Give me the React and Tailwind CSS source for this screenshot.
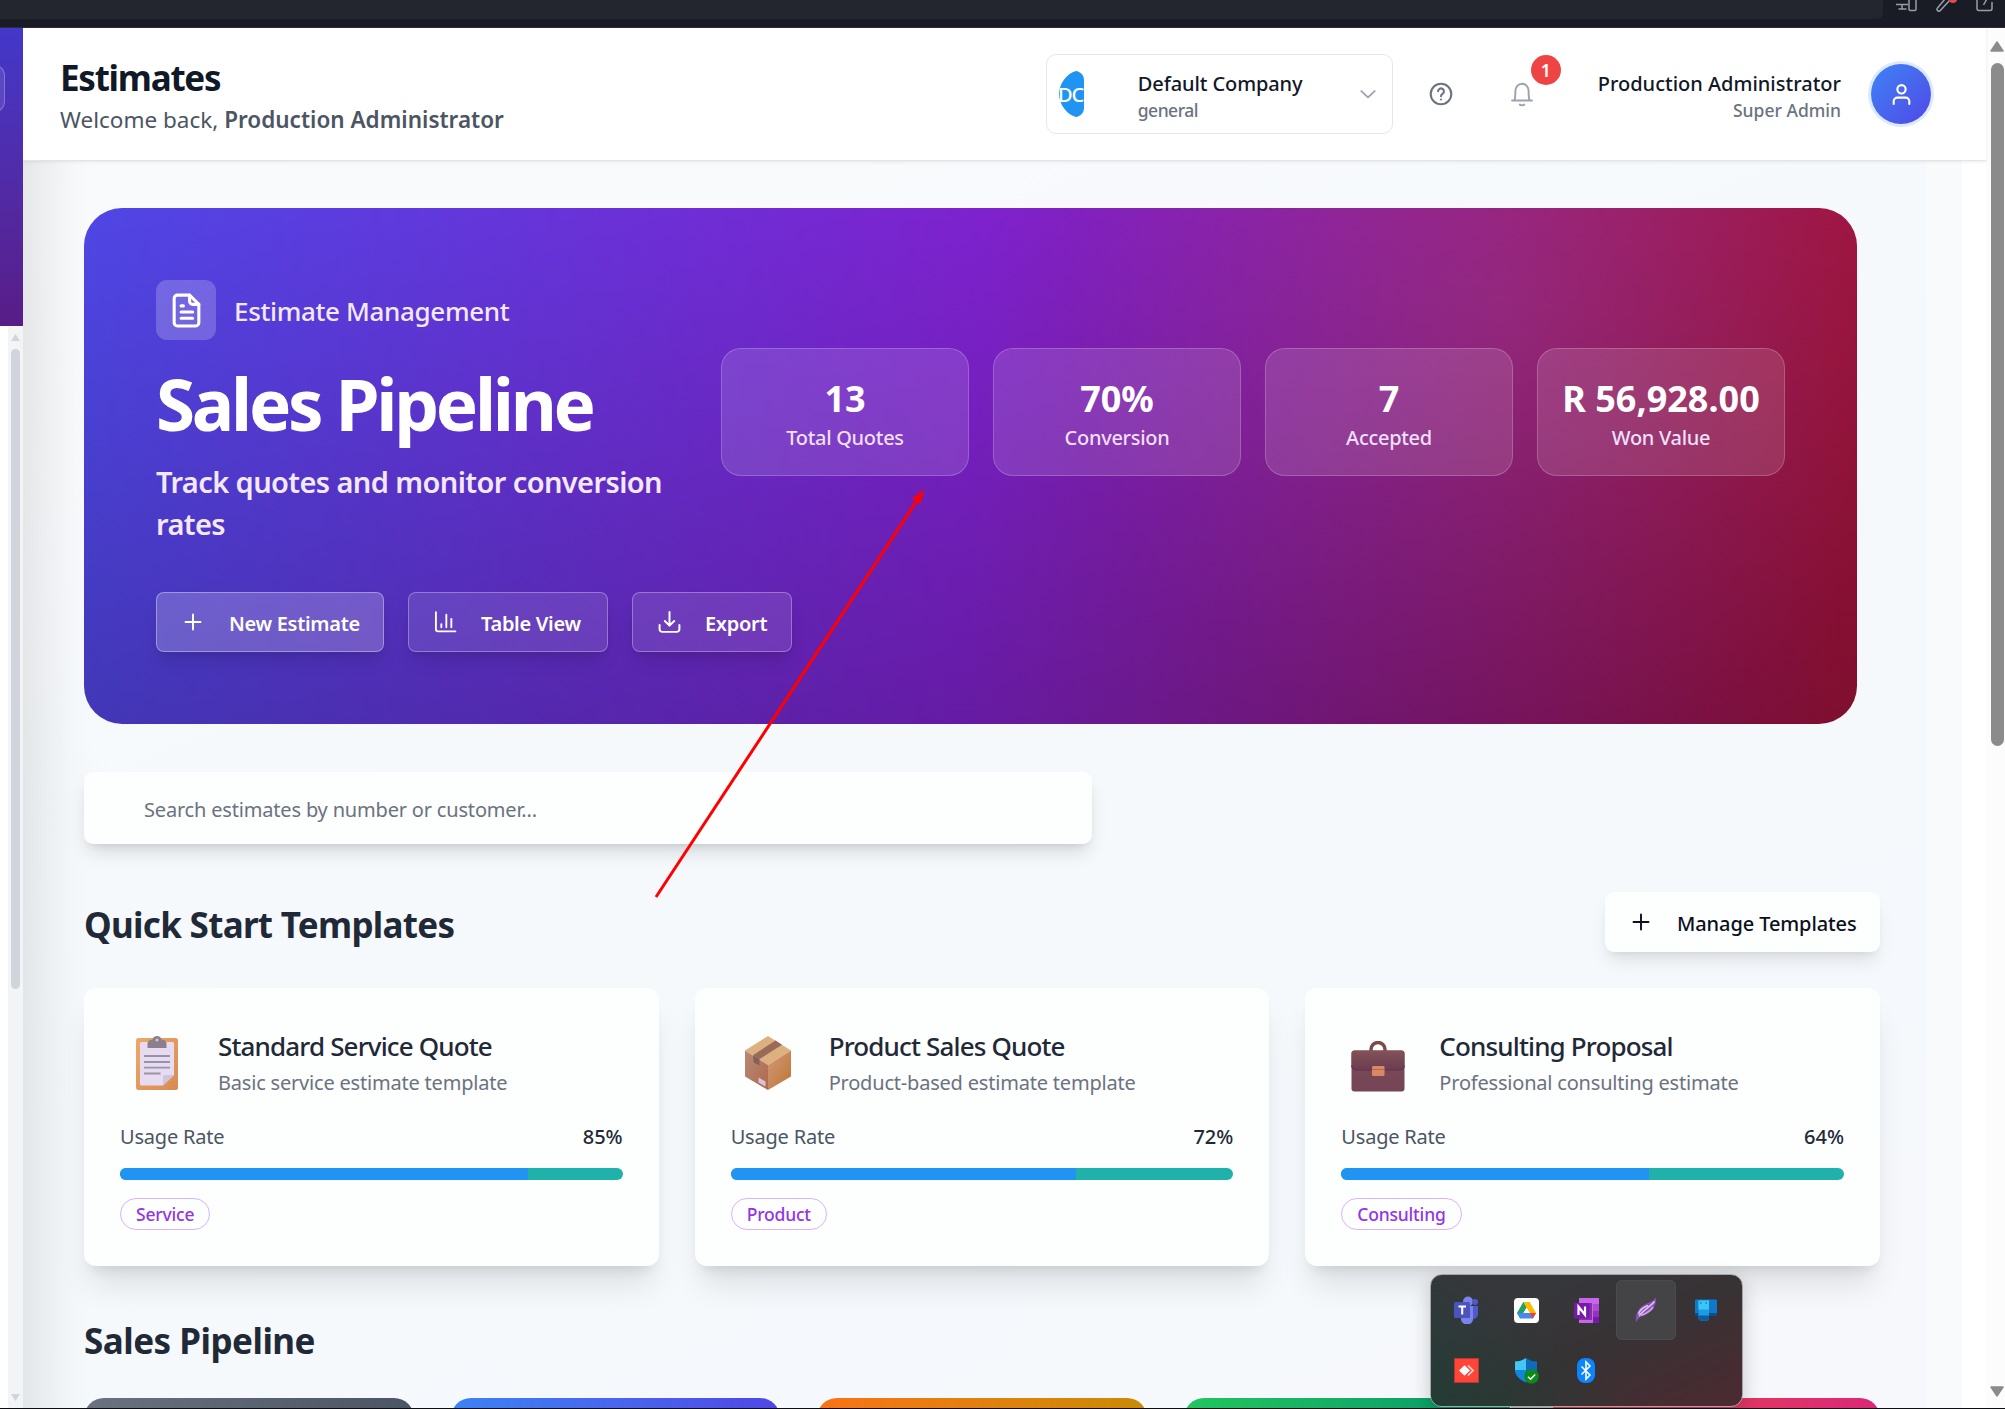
import React from "react";

const Svg = ({ size = 24, w = 2, className = "", children }) => (
  <svg width={size} height={size} viewBox="0 0 24 24" fill="none" stroke="currentColor" strokeWidth={w} strokeLinecap="round" strokeLinejoin="round" className={className}>
    {children}
  </svg>
);

const PlusIcon = () => (
  <Svg size={24} w={1.9}><path d="M12 4.5v15M4.5 12h15" /></Svg>
);
const ChartIcon = () => (
  <Svg size={25} w={1.8}><path d="M2.8 2v16.5a2 2 0 0 0 2 2H21.5M8 16.500v-3M12.800 16.500v-12M17.600 16.500v-8" /></Svg>
);
const DownloadIcon = () => (
  <Svg size={25} w={1.9}><path d="M2.500 14.500v4a2.500 2.500 0 0 0 2.500 2.500h14a2.500 2.500 0 0 0 2.500-2.500v-4M7.500 10.500l4.500 4.500 4.500-4.500M12 15V2" /></Svg>
);

function Clipboard() {
  return (
    <svg width="44" height="56" viewBox="0 0 44 56">
      <defs>
        <linearGradient id="board" x1="0" y1="0" x2="1" y2="1"><stop offset="0" stopColor="#efa869" /><stop offset="1" stopColor="#d98a55" /></linearGradient>
      </defs>
      <rect x="1" y="3" width="42" height="52" rx="2.500" fill="url(#board)" />
      <path d="M6.500 7h31A1.500 1.500 0 0 1 39 8.500V40L28 50.500H6.500A1.500 1.500 0 0 1 5 49V8.500A1.500 1.500 0 0 1 6.500 7z" fill="#e6dcf1" />
      <path d="M28 50.500V41.500A1.500 1.500 0 0 1 29.500 40H39z" fill="#cfc5dd" />
      <path d="M12.500 13V8.500C12.500 6 14.500 5 17.500 4.500 18 2.300 19.500 1 22 1s4 1.300 4.500 3.500c3 .5 5 1.500 5 4V13z" fill="#8b7f8c" />
      <circle cx="22" cy="5" r="1.500" fill="#cfc5dd" />
      <path d="M9 21h26M9 27h26M9 32.700h26M9 38.500h16.500" stroke="#9b90a8" strokeWidth="1.800" />
    </svg>
  );
}

function Package() {
  return (
    <svg width="50" height="56" viewBox="0 0 50 56">
      <defs>
        <linearGradient id="pkl" x1="0" y1="0" x2="1" y2="1"><stop offset="0" stopColor="#b78a76" /><stop offset="1" stopColor="#b0694b" /></linearGradient>
        <linearGradient id="pkr" x1="0" y1="0" x2="1" y2="1"><stop offset="0" stopColor="#d29a7a" /><stop offset="1" stopColor="#bd7432" /></linearGradient>
      </defs>
      <path d="M25 1 48 15.500 25 30 2 15.500z" fill="#ddb080" />
      <path d="M2 15.500 25 30v25L2 41.500z" fill="url(#pkl)" />
      <path d="M48 15.500 25 30v25l23-13.500z" fill="url(#pkr)" />
      <path d="M32.500 5.500 39 9.700 16.500 24 10 20.200z" fill="#986b56" />
      <path d="M10 20.200 16.500 24v6.500L10.800 27.500z" fill="#82605a" />
      <path d="M15.500 42.500l7 4v5l-7-4z" fill="#d8c4dc" />
    </svg>
  );
}

function Briefcase() {
  return (
    <svg width="56" height="52" viewBox="0 0 56 52" className="mt-[7px]">
      <defs>
        <linearGradient id="brief" x1="0" y1="0" x2="0" y2="1"><stop offset="0" stopColor="#7a4d54" /><stop offset="1" stopColor="#754457" /></linearGradient>
        <linearGradient id="flap" x1="0" y1="0" x2="0" y2="1"><stop offset="0" stopColor="#845258" /><stop offset="1" stopColor="#6a3d52" /></linearGradient>
      </defs>
      <path d="M21 11V8.500a7 7 0 0 1 14 0V11" fill="none" stroke="#7a4b48" strokeWidth="3.400" />
      <rect x="1.500" y="9.500" width="53" height="41" rx="3" fill="url(#brief)" />
      <path d="M1.500 12.500a3 3 0 0 1 3-3h47a3 3 0 0 1 3 3v11a5 5 0 0 1-5 5h-43a5 5 0 0 1-5-5z" fill="url(#flap)" />
      <path d="M1.500 24.500a5 5 0 0 0 5 4.500h43a5 5 0 0 0 5-4.500" fill="none" stroke="#622a55" strokeWidth="1.100" />
      <rect x="22" y="25" width="12.500" height="10" rx="1.200" fill="#d98862" />
      <path d="M22 28.500h12.500" stroke="#b8665a" strokeWidth="1" />
    </svg>
  );
}

const STATS = [
  ["13", "Total Quotes"],
  ["70%", "Conversion"],
  ["7", "Accepted"],
  ["R 56,928.00", "Won Value"],
];

const TEMPLATES = [
  { icon: <Clipboard />, title: "Standard Service Quote", text: "Basic service estimate template", rate: 85, fill: 81.2, tag: "Service" },
  { icon: <Package />, title: "Product Sales Quote", text: "Product-based estimate template", rate: 72, fill: 68.7, tag: "Product" },
  { icon: <Briefcase />, title: "Consulting Proposal", text: "Professional consulting estimate", rate: 64, fill: 61.2, tag: "Consulting" },
];

const STAGES = [
  "from-[#6b7280] to-[#4b5563]",
  "from-[#3b82f6] to-[#4f46e5]",
  "from-[#f97316] to-[#ca8a04]",
  "from-[#22c55e] to-[#059669]",
  "from-[#ef4444] to-[#db2777]",
];

function BrowserBar() {
  return (
    <div className="flex h-[28px] shrink-0 items-start border-b border-[#2b2e39] bg-[#191c25]">
      <div className="h-[19px] w-[1883px] rounded-br-[6px] bg-[#23262f]" />
      <div className="ml-[13px] flex h-[12px] gap-[19px] overflow-hidden text-[#9a9da6]">
        <svg width="21" height="12" viewBox="0 0 21 12" fill="none" stroke="currentColor" strokeWidth="1.500"><path d="M0 4.500h12M6 4.500v4.500M2.500 9h8" /><rect x="13" y="-4" width="7" height="14.500" rx="1.200" /></svg>
        <svg width="21" height="12" viewBox="0 0 21 12" fill="none" stroke="currentColor" strokeWidth="1.500"><path d="M9-1 1.500 8a1.800 1.800 0 0 0 2.800 2.500L14 0" /><circle cx="17" cy="-1.500" r="4.500" fill="#e5484d" stroke="none" /></svg>
        <svg width="20" height="12" viewBox="0 0 20 12" fill="none" stroke="currentColor" strokeWidth="1.500"><path d="M1-3V8.500a2 2 0 0 0 2 2h11a2 2 0 0 0 2-2V2M7.500 5 12-3" /></svg>
      </div>
    </div>
  );
}

function Header() {
  return (
    <header className="relative z-10 flex h-[133px] shrink-0 items-center border-b border-[#e2e4e8] bg-white pr-[55px] pl-[37px] shadow-[0_1px_3px_rgba(0,0,0,0.08)]">
      <div className="flex-1 pt-[5px]">
        <h1 className="text-[35px] leading-[44px] font-bold tracking-[-1.25px] text-[#111827]">Estimates</h1>
        <p className="mt-[2px] text-[22.5px] leading-[35px] text-[#4b5563]">
          Welcome back, <span className="font-semibold">Production Administrator</span>
        </p>
      </div>
      <div className="flex h-[80px] w-[347px] items-center rounded-[10px] border border-[#e5e7eb] pr-[14px] pl-[12px]">
        <svg width="25" height="46" viewBox="0 0 25 46" className="shrink-0">
          <path d="M17 0C8 2 0 13 0 23s8 21 17 23c4-.5 8-4 8-9V9c0-5-4-8.500-8-9z" fill="#2094f3" />
          <text x="-1" y="31" fill="#fff" fontSize="20" fontFamily="Noto Sans" fontWeight="500" letterSpacing="-1">DC</text>
        </svg>
        <div className="ml-[54px] flex-1 pt-[4px]">
          <div className="text-[20px] leading-[28px] font-medium tracking-[-0.1px] text-[#111827]">Default Company</div>
          <div className="text-[17.5px] leading-[25px] font-medium tracking-[-0.5px] text-[#6b7280]">general</div>
        </div>
        <Svg size={20} w={2.200} className="text-[#9ca3af]"><path d="m4 8.500 8 7.500 8-7.500" /></Svg>
      </div>
      <Svg size={26} w={1.900} className="ml-[35px] text-[#6b7280]">
        <circle cx="12" cy="12" r="9.500" /><path d="M9.300 9.500a2.700 2.700 0 1 1 4.300 2.200c-1 .7-1.600 1.200-1.600 2.300M12 17v.1" />
      </Svg>
      <div className="relative ml-[55px]">
        <Svg size={26} w={1.800} className="text-[#9ca3af]">
          <path d="M2.800 18h18.400M5 18c.8-2 .9-4 .9-8.500C5.900 5.500 8.500 2.500 12 2.500s6.100 3 6.100 7c0 4.500.1 6.500.9 8.500M10 21.800c.5.800 3.500.8 4 0" />
        </Svg>
        <span className="absolute -top-[26px] left-[22px] flex size-[30px] items-center justify-center rounded-full bg-[#ef4444] text-[17.5px] font-semibold text-white">1</span>
      </div>
      <div className="ml-[63px] pt-[4px] text-right">
        <div className="text-[20px] leading-[28px] font-medium text-[#111827]">Production Administrator</div>
        <div className="text-[17.5px] leading-[25px] font-medium text-[#6b7280]">Super Admin</div>
      </div>
      <div className="ml-[30px] flex size-[60px] items-center justify-center rounded-full bg-linear-to-br from-[#3b82f6] to-[#4f46e5] text-white ring-[3px] ring-[#dbeafe]">
        <Svg size={25} w={2}><circle cx="12" cy="7" r="4" /><path d="M4.500 21v-2.500a3.500 3.500 0 0 1 3.500-3.500h8a3.500 3.500 0 0 1 3.500 3.500V21" /></Svg>
      </div>
    </header>
  );
}

function HeroButton({ icon, label, width, className }) {
  return (
    <button className={`flex h-[60px] items-center rounded-[8px] border pl-[24px] text-[20px] font-semibold tracking-[-0.3px] text-white shadow-[0_12px_19px_-4px_rgba(0,0,0,0.12),0_5px_8px_-5px_rgba(0,0,0,0.1)] ${className}`}>
      {icon}
      <span className={`pt-[3px] ${width}`}>{label}</span>
    </button>
  );
}

function Hero() {
  return (
    <section className="flex h-[516px] w-[1773px] shrink-0 rounded-[38px] bg-[linear-gradient(to_top,rgba(0,0,0,0.2),rgba(0,0,0,0)),radial-gradient(circle_at_80%_20%,rgba(255,255,255,0.07),rgba(255,255,255,0)_30%),linear-gradient(94deg,#4f46e5,#7e22ce_50%,#9f1239)] pt-[72px] pl-[72px]">
      <div className="w-[565px] shrink-0">
        <div className="flex items-center gap-[18px]">
          <div className="flex size-[60px] items-center justify-center rounded-[11px] bg-white/20 text-white">
            <Svg size={37} w={2}>
              <path d="M14 2H6a2 2 0 0 0-2 2v16a2 2 0 0 0 2 2h12a2 2 0 0 0 2-2V8z" /><path d="M14 2v4a2 2 0 0 0 2 2h4M10 9H8.500M16 13H8.500M16 17H8.500" />
            </Svg>
          </div>
          <span className="pt-[3px] text-[26px] font-medium tracking-[-0.35px] text-[#f3e8ff]">Estimate Management</span>
        </div>
        <h2 className="mt-[17px] text-[71px] leading-[94px] font-bold tracking-[-3.3px] text-white">Sales Pipeline</h2>
        <p className="mt-[10px] w-[530px] text-[29px] leading-[42px] font-semibold tracking-[-0.6px] text-[#f3e8ff]">Track quotes and monitor conversion rates</p>
        <div className="mt-[47px] flex w-[640px] gap-[24px]">
          <HeroButton icon={<PlusIcon />} label="New Estimate" width="ml-[24px]" className="w-[228px] border-white/35 bg-white/20" />
          <HeroButton icon={<ChartIcon />} label="Table View" width="ml-[23px]" className="w-[200px] border-white/30 bg-white/10" />
          <HeroButton icon={<DownloadIcon />} label="Export" width="ml-[23px]" className="w-[160px] border-white/30 bg-white/10" />
        </div>
      </div>
      <div className="mt-[68px] flex h-[128px] gap-[24px]">
        {STATS.map(([value, label]) => (
          <div key={label} className="flex w-[248px] flex-col items-center rounded-[20px] border border-white/20 bg-white/12 pt-[29px]">
            <div className="text-[36px] leading-[42px] font-bold whitespace-nowrap text-white">{value}</div>
            <div className="mt-[3px] text-[20px] leading-[30px] font-medium tracking-[-0.3px] text-[#efdffb]">{label}</div>
          </div>
        ))}
      </div>
    </section>
  );
}

function TemplateCard({ icon, title, text, rate, fill, tag }) {
  return (
    <div className="h-[278px] rounded-[12px] bg-[#fdfefe] px-[36px] pt-[36px] shadow-[0_25px_31px_-6px_rgba(0,0,0,0.1),0_10px_12px_-7px_rgba(0,0,0,0.1)]">
      <div className="flex h-[78px] items-center">
        <div className="flex w-[74px] justify-center">{icon}</div>
        <div className="ml-[24px] pt-[3px]">
          <h3 className="text-[26px] leading-[36px] font-medium tracking-[-0.85px] text-[#1f2937]">{title}</h3>
          <p className="text-[20px] leading-[37px] tracking-[-0.2px] text-[#6b7280]">{text}</p>
        </div>
      </div>
      <div className="mt-[20px] flex items-center justify-between text-[20px] leading-[30px]">
        <span className="tracking-[-0.2px] text-[#4b5563]">Usage Rate</span>
        <span className="font-medium text-[#1f2937]">{rate}%</span>
      </div>
      <div className="mt-[16px] h-[12px] overflow-hidden rounded-full bg-[#20b2aa]">
        <div className="h-full bg-[#2094f3]" style={{ width: `${fill}%` }} />
      </div>
      <span className="mt-[18px] flex h-[32px] w-fit items-center rounded-full border border-[#d8b4fe] px-[15px] pt-[1px] text-[17.5px] font-medium tracking-[-0.2px] text-[#9333ea]">{tag}</span>
    </div>
  );
}

function TrayCell({ children, active }) {
  return <div className={`flex size-[60px] items-center justify-center rounded-[6px] ${active ? "bg-[#444447] ring-1 ring-[#4b4b4e] ring-inset" : ""}`}>{children}</div>;
}

function Tray() {
  return (
    <div className="absolute top-[1274px] left-[1430px] z-30 h-[133px] w-[313px] rounded-[12px] border-[1.500px] border-[#a3a5a7] bg-[linear-gradient(155deg,#36373b_25%,#373234_55%,#4a2b31_95%)] shadow-[0_6px_20px_rgba(0,0,0,0.2)]">
      <div className="grid h-full grid-cols-[repeat(5,60px)] grid-rows-[60px_60px] rounded-[11px] bg-[linear-gradient(35deg,rgba(30,62,52,0.8),rgba(30,62,52,0)_45%)] pt-[5px] pl-[5px]">
        <TrayCell>
          <svg width="26" height="28" viewBox="0 0 26 28">
            <circle cx="15" cy="5.500" r="5" fill="#7b83eb" /><circle cx="22" cy="6" r="3" fill="#5059c9" />
            <path d="M18 10h7v9a4.500 4.500 0 0 1-7 3z" fill="#5059c9" /><path d="M8 10h12v11a6 6 0 0 1-12 3z" fill="#7b83eb" />
            <rect x="1" y="6" width="16" height="16" rx="1.500" fill="#4b53bc" />
            <path d="M5.500 10.500h7.500M9.200 10.500v8" stroke="#fff" strokeWidth="2.100" />
          </svg>
        </TrayCell>
        <TrayCell>
          <svg width="25" height="25" viewBox="0 0 25 25">
            <rect width="25" height="25" rx="4" fill="#fff" />
            <path d="M9.300 4h6.400l-2 4-7.500 12.500L3 15z" fill="#1ea362" /><path d="M9.300 4h6.400L22 15h-6.300z" fill="#ffba00" />
            <path d="M3 15l3.200 5.500h12.600L22 15H9.200z" fill="#4688f4" /><path d="M22 15l-3.200 5.500L15.700 15z" fill="#ea4335" /><path d="M12.500 9.800 15.500 15h-6z" fill="#fff" />
          </svg>
        </TrayCell>
        <TrayCell>
          <svg width="25" height="25" viewBox="0 0 25 25">
            <path d="M5 0h20v25H5z" fill="#ca64ea" /><path d="M19 6h6v7h-6z" fill="#ae4bd5" /><path d="M19 13h6v6h-6z" fill="#9332bf" /><path d="M19 19h6v6h-6z" fill="#7719aa" />
            <path d="M5 5h13v17H5z" fill="#521078" opacity=".6" /><rect y="5" width="15.500" height="15.500" rx="1" fill="#7719aa" />
            <path d="M4.500 17V8.700l6.500 8.100V8.500" fill="none" stroke="#fff" strokeWidth="2.200" />
          </svg>
        </TrayCell>
        <TrayCell active>
          <svg width="22" height="26" viewBox="0 0 22 26">
            <path d="M1 25.500C0 18 3 11 9 8c5-2.500 9-3.500 12-7.500C21.500 8 18 14 12 16.500 7 18.500 3.500 20.500 1 25.500z" fill="#8a4fb8" />
            <path d="M4 19C8 13 14 11 19.500 4.500M3.500 17C5 12 9 10 13 8.500" fill="none" stroke="#e0c8f0" strokeWidth="1.500" />
            <path d="M6 18.500c4-1.500 9-3.500 12-8.500" fill="none" stroke="#c9a3e2" strokeWidth="1.800" />
          </svg>
        </TrayCell>
        <TrayCell>
          <svg width="22" height="22" viewBox="0 0 22 22">
            <rect y=".5" width="22" height="16" rx="1" fill="#1279ca" /><path d="M0 14h22v3H0z" fill="#0b4f8c" />
            <path d="M3.500 1.500h10.500v18a2 2 0 0 1-2 2H5.500a2 2 0 0 1-2-2z" fill="#1e9be3" /><path d="M3.500 1.500h10.500v9H3.500z" fill="#3cc6f4" /><path d="M3.500 16.500h10.500v3a2 2 0 0 1-2 2H5.500a2 2 0 0 1-2-2z" fill="#0a5ea8" />
            <path d="M5 4h1.500M10.500 4H12" stroke="#0f7fc9" strokeWidth="1.500" />
          </svg>
        </TrayCell>
        <TrayCell>
          <svg width="25" height="25" viewBox="0 0 25 25">
            <rect x=".5" y=".5" width="24" height="24" fill="#ff4538" stroke="#b13a33" />
            <path d="M5 12.500l5.500-5.300 5.500 5.300-5.500 5.300z" fill="#fff" /><path d="M14 7.500l5 5-5 5" fill="none" stroke="#ffd9d5" strokeWidth="1.700" />
          </svg>
        </TrayCell>
        <TrayCell>
          <svg width="25" height="27" viewBox="0 0 25 27">
            <path d="M12 1c3.500 2.500 7 3.500 11 3.500v8c0 6-4.500 10-11 13-6.500-3-11-7-11-13v-8C5 4.500 8.500 3.500 12 1z" fill="#0f6cbd" />
            <path d="M12 1v12H1V4.500C5 4.500 8.500 3.500 12 1z" fill="#41c8f5" /><path d="M12 13v12.500C5.500 22.500 1 18.500 1 13z" fill="#1184dc" />
            <circle cx="17.500" cy="19.500" r="7.300" fill="#0c8a1c" /><path d="M14 19.700l2.600 2.500 4.600-4.700" fill="none" stroke="#fff" strokeWidth="1.500" />
          </svg>
        </TrayCell>
        <TrayCell>
          <svg width="18" height="25" viewBox="0 0 18 25">
            <rect width="18" height="25" rx="8" fill="#0a84ff" />
            <path d="M4.500 8.500l8.500 8.500-4 4V4l4 4-8.500 8.500" fill="none" stroke="#fff" strokeWidth="1.600" />
          </svg>
        </TrayCell>
      </div>
    </div>
  );
}

export default function App() {
  return (
    <div className="relative flex h-[1409px] w-[2005px] flex-col overflow-hidden bg-white font-['Noto_Sans',sans-serif]">
      <BrowserBar />
      <div className="flex min-h-0 flex-1">
        <aside className="relative z-20 flex w-[23px] shrink-0 flex-col">
          <div className="h-[298px] overflow-hidden bg-linear-to-b from-[#4338ca] to-[#581c87] pt-[36px]">
            <div className="-ml-[20px] h-[49px] w-[25px] rounded-[12px] border border-white/25 bg-white/10" />
          </div>
          <div className="flex flex-1 bg-white">
            <div className="ml-[8px] flex w-[15px] flex-col items-center bg-[#f3f4f6] pt-[8px] pb-[8px]">
              <svg width="9" height="7" viewBox="0 0 9 7"><path d="M4.500 0 9 7H0z" fill="#d1d5db" /></svg>
              <div className="mt-[8px] h-[640px] w-[9px] rounded-full bg-[#d1d5db]" />
              <svg width="9" height="7" viewBox="0 0 9 7" className="mt-auto"><path d="M4.500 7 9 0H0z" fill="#d1d5db" /></svg>
            </div>
          </div>
        </aside>
        <div className="flex w-[1963px] shrink-0 flex-col">
          <Header />
          <div className="flex min-h-0 flex-1">
            <main className="flex w-[1939px] shrink-0 flex-col bg-[linear-gradient(90deg,rgba(0,0,0,0.08),rgba(0,0,0,0.045)_1.200%,rgba(0,0,0,0.012)_2.500%,transparent_3.600%),linear-gradient(90deg,transparent_1903px,#f9fafc_1903px),linear-gradient(160deg,#f9fafc,#f5f9fc_50%,#f6f8fc)] pt-[47px] pl-[61px]">
              <Hero />
              <div className="mt-[48px] flex h-[72px] w-[1008px] shrink-0 items-center rounded-[9px] bg-[#fdfefe] pt-[4px] pl-[60px] text-[20px] tracking-[-0.18px] text-[#6b7280] shadow-[0_12px_19px_-4px_rgba(0,0,0,0.13),0_5px_8px_-5px_rgba(0,0,0,0.13)]">
                Search estimates by number or customer...
              </div>
              <div className="mt-[48px] flex h-[60px] w-[1796px] shrink-0 items-center justify-between">
                <h2 className="pt-[6px] text-[35px] font-bold tracking-[-0.7px] text-[#1f2937]">Quick Start Templates</h2>
                <button className="flex h-[60px] w-[275px] items-center rounded-[9px] bg-[#fdfefe] pl-[24px] text-[20px] font-medium tracking-[-0.1px] text-[#0b1020] shadow-[0_12px_19px_-4px_rgba(0,0,0,0.1),0_5px_8px_-5px_rgba(0,0,0,0.1)]">
                  <PlusIcon />
                  <span className="ml-[24px] pt-[4px]">Manage Templates</span>
                </button>
              </div>
              <div className="mt-[36px] grid w-[1796px] shrink-0 grid-cols-3 gap-[36px]">
                {TEMPLATES.map((t) => (
                  <TemplateCard key={t.title} {...t} />
                ))}
              </div>
              <h2 className="mt-[48px] h-[60px] shrink-0 text-[35px] leading-[54px] font-bold tracking-[-0.5px] text-[#1f2937]">Sales Pipeline</h2>
              <div className="mt-[24px] grid w-[1796px] shrink-0 grid-cols-5 gap-[37px]">
                {STAGES.map((s) => (
                  <div key={s} className={`h-[120px] rounded-[20px] bg-linear-to-r ${s}`} />
                ))}
              </div>
            </main>
            <div className="flex-1 bg-white" />
          </div>
        </div>
        <div className="flex flex-1 flex-col items-center bg-[#fcfcfc] pt-[13px] pb-[12px] pl-[3px]">
          <svg width="14" height="11" viewBox="0 0 14 11"><path d="M7 1 13 10H1z" fill="#8b8b8b" stroke="#8b8b8b" strokeWidth="1.500" strokeLinejoin="round" /></svg>
          <div className="mt-[11px] h-[683px] w-[13px] rounded-full bg-[#8b8b8b]" />
          <svg width="14" height="11" viewBox="0 0 14 11" className="mt-auto"><path d="M7 10 13 1H1z" fill="#8b8b8b" stroke="#8b8b8b" strokeWidth="1.500" strokeLinejoin="round" /></svg>
        </div>
      </div>
      <svg className="absolute top-[485px] left-[650px] z-30" width="280" height="418" viewBox="650 485 280 418">
        <path d="M656 897 918 499" stroke="#ff0000" strokeWidth="3" />
        <path d="M924 489 920.500 504 912 499z" fill="#ff0000" />
      </svg>
      <Tray />
      <div className="absolute bottom-[1px] left-[1511px] z-40 h-[2px] w-[42px] bg-[#a5a7a9]" />
      <div className="absolute bottom-0 left-0 z-50 h-[1px] w-full bg-[#0c0d12]" />
    </div>
  );
}
